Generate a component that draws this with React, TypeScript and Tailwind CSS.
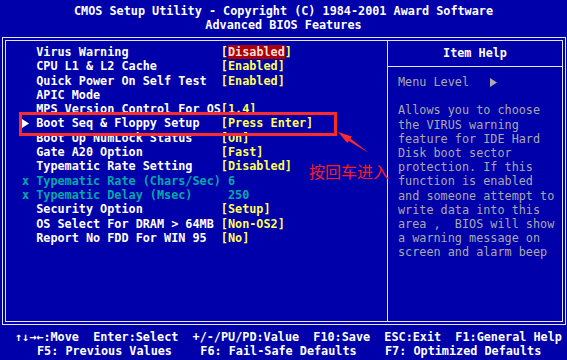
import React from "react";

const rows = [
  { name: "Virus Warning", value: "Disabled", red: true },
  { name: "CPU L1 & L2 Cache", value: "[Enabled]" },
  { name: "Quick Power On Self Test", value: "[Enabled]" },
  { name: "APIC Mode", value: "" },
  { name: "MPS Version Control For OS", value: "[1.4]" },
  { name: "Boot Seq & Floppy Setup", value: "[Press Enter]", arrow: true },
  { name: "Boot Up NumLock Status", value: "[On]" },
  { name: "Gate A20 Option", value: "[Fast]" },
  { name: "Typematic Rate Setting", value: "[Disabled]" },
  { name: "Typematic Rate (Chars/Sec)", value: " 6", dim: true },
  { name: "Typematic Delay (Msec)", value: " 250", dim: true },
  { name: "Security Option", value: "[Setup]" },
  { name: "OS Select For DRAM > 64MB", value: "[Non-OS2]" },
  { name: "Report No FDD For WIN 95", value: "[No]" },
];

const help = [
  "Allows you to choose",
  "the VIRUS warning",
  "feature for IDE Hard",
  "Disk boot sector",
  "protection. If this",
  "function is enabled",
  "and someone attempt to",
  "write data into this",
  "area ,  BIOS will show",
  "a warning message on",
  "screen and alarm beep",
];

const Tri = ({ color }: { color: string }) => (
  <svg width="7" height="9" viewBox="0 0 7 9" className="inline-block">
    <polygon points="0,0 7,4.5 0,9" fill={color} />
  </svg>
);

const Row = ({ row }: { row: any }) => {
  return (
    <div className="flex h-[14.3px] items-center whitespace-pre">
      <span className="flex w-[2ch] items-center text-[#00aaaa]">
        {row.arrow ? <Tri color="#ffffff" /> : row.dim ? "x" : ""}
      </span>
      <span className={`w-[26ch] ${row.dim ? "text-[#00aaaa]" : "text-white"}`}>{row.name}</span>
      {row.red ? (
        <span className="text-[#ffff55]">
          [<span className="bg-[#aa0000] text-[#ffdede]">{row.value}</span>]
        </span>
      ) : (
        <span className={row.dim ? "text-[#00aaaa]" : "text-[#ffff55]"}>{row.value}</span>
      )}
    </div>
  );
};

export default function App() {
  return (
    <div className="relative flex h-[360px] w-[567px] flex-col overflow-hidden bg-[#0000aa] font-['DejaVu_Sans_Mono',monospace] text-[11.8px] font-bold text-white">
      {/* header */}
      <div className="flex h-[37px] flex-col items-center pt-[4px] leading-[14px]">
        <div className="whitespace-pre">CMOS Setup Utility - Copyright (C) 1984-2001 Award Software</div>
        <div className="whitespace-pre">Advanced BIOS Features</div>
      </div>

      {/* double frame */}
      <div className="ml-[2px] h-[288px] w-[564px] border border-[#e6e6ff] p-[2px]">
        <div className="flex h-full w-full border border-[#e6e6ff]">
          <div className="w-[381px] pl-[16px] pt-[4px] leading-[14.3px]">
            {rows.map((row, i) => (
              <Row key={i} row={row} />
            ))}
          </div>
          <div className="flex flex-1 flex-col border-l border-[#e6e6ff]">
            <div className="flex h-[26px] items-center justify-center border-b border-[#e6e6ff]">Item Help</div>
            <div className="pl-[10px] pt-[8px] font-normal leading-[14.2px] text-[#aaaaaa]">
              <div className="flex h-[14.2px] items-center whitespace-pre">
                <span className="w-[13ch]">Menu Level</span>
                <Tri color="#aaaaaa" />
              </div>
              <div className="h-[14.2px]" />
              {help.map((line, i) => (
                <div key={i} className="whitespace-pre">
                  {line}
                </div>
              ))}
            </div>
          </div>
        </div>
      </div>

      {/* footer */}
      <div className="flex flex-col pt-[5px] leading-[14px]">
        <div className="whitespace-pre pl-[15px]">↑↓→←:Move  Enter:Select  +/-/PU/PD:Value  F10:Save  ESC:Exit  F1:General Help</div>
        <div className="whitespace-pre pl-[37px]">F5: Previous Values    F6: Fail-Safe Defaults    F7: Optimized Defaults</div>
      </div>

      {/* red annotation */}
      <div className="absolute left-[19px] top-[112px] h-[24px] w-[318px] border-[3px] border-[#ff2b2b]" />
      <svg className="absolute left-0 top-0" width="567" height="360">
        <polygon
          points="338,132 351.8,136.4 350.4,138.5 369,153 348.8,140.9 347.4,143"
          fill="#ff2b2b"
        />
      </svg>
      <div className="absolute left-[309px] top-[161px] font-['Noto_Sans_CJK_SC',sans-serif] text-[16px] font-normal leading-[20px] text-[#ff1a1a]">
        按回车进入
      </div>
    </div>
  );
}
